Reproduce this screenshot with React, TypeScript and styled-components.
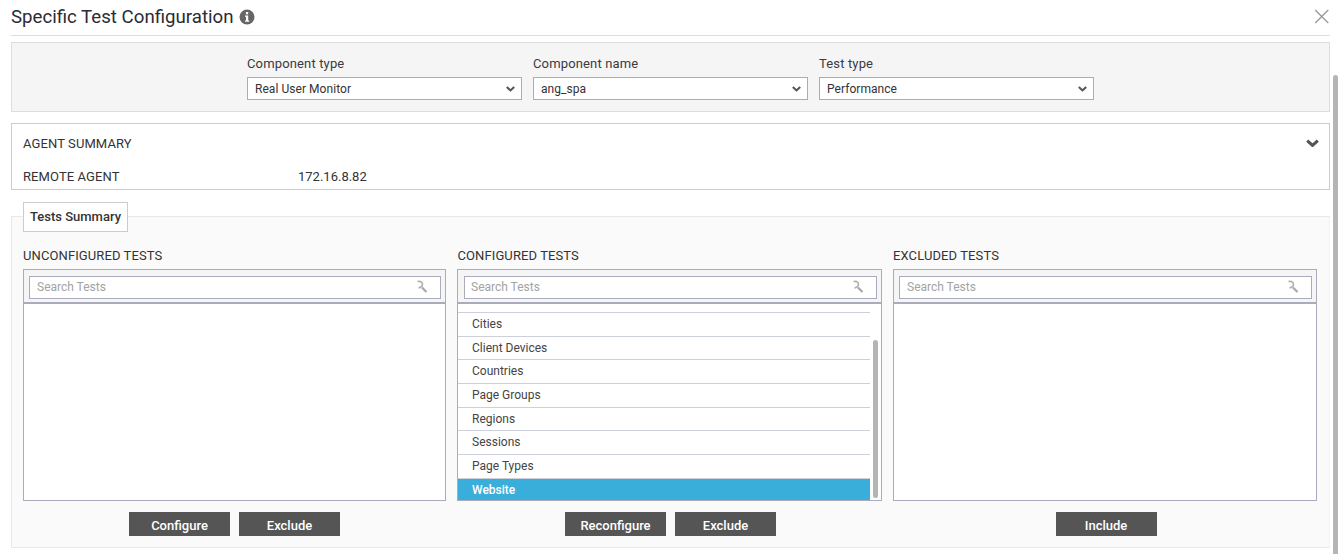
import styled, { createGlobalStyle } from "styled-components";

const GlobalStyle = createGlobalStyle`
    html, body {
        margin: 0;
        height: 100%;
        overflow: hidden;
        background: #fff;
    }
    * {
        box-sizing: border-box;
    }
`;

const Page = styled.div`
    position: relative;
    width: 1338px;
    height: 554px;
    padding: 0 8px 0 11px;
    overflow: hidden;
    font-family: Roboto, "Liberation Sans", sans-serif;
    font-size: 13px;
    color: #333;
`;

const PageScrollThumb = styled.div`
    position: absolute;
    top: 75px;
    right: 0;
    bottom: 0;
    width: 5px;
    border-radius: 3px 3px 0 0;
    background: #b5b5b5;
`;

const Header = styled.div`
    display: flex;
    align-items: center;
    justify-content: space-between;
    height: 36px;
    padding-bottom: 1px;
    border-bottom: 1px solid #ddd;
`;

const TitleRow = styled.div`
    display: flex;
    align-items: center;
    gap: 6px;
`;

const Title = styled.h1`
    margin: 0;
    font-size: 18.67px;
    font-weight: 400;
    line-height: 33px;
    color: #2b2b35;
`;

const CloseButton = styled.button`
    display: flex;
    padding: 0;
    margin: 0 1px 1px 0;
    border: 0;
    background: none;
`;

const FilterPanel = styled.div`
    display: flex;
    justify-content: center;
    gap: 11px;
    height: 70px;
    margin-top: 6px;
    padding: 13px 0 0;
    border: 1px solid #ddd;
    background: #f5f5f5;
`;

const Field = styled.div`
    display: flex;
    flex-direction: column;
    width: 275px;
`;

const FieldLabel = styled.label`
    height: 21px;
    line-height: 16px;
    letter-spacing: 0.15px;
    color: #3a3a42;
`;

const SelectWrap = styled.div`
    position: relative;
    height: 23px;
`;

const Select = styled.select`
    width: 100%;
    height: 100%;
    padding: 0 0 0 7px;
    border: 1px solid #aaacbc;
    border-radius: 0;
    appearance: none;
    background: #fff;
    font: 12px Roboto, "Liberation Sans", sans-serif;
    letter-spacing: 0.05px;
    color: #333;
`;

const SelectChevron = styled.span`
    position: absolute;
    top: 9px;
    right: 7px;
    display: flex;
    pointer-events: none;
`;

const AgentBox = styled.section`
    height: 67px;
    margin-top: 11px;
    padding: 0 10px 0 11px;
    border: 1px solid #ccc;
    background: #fff;
`;

const AgentHeading = styled.div`
    display: flex;
    align-items: center;
    justify-content: space-between;
    height: 38px;
    font-size: 13px;
    letter-spacing: 0.1px;
    color: #333;
`;

const AgentRow = styled.div`
    display: grid;
    grid-template-columns: 275px 1fr;
    margin-top: 7px;
    line-height: 16px;
    font-size: 13px;
`;

const AgentKey = styled.span`
    letter-spacing: 0.1px;
`;

const SummaryPanel = styled.section`
    position: relative;
    height: 332px;
    margin-top: 26px;
    padding: 32px 12px 0 11px;
    border: 1px solid #e8e8e8;
    border-right-color: #f2f2f2;
    background: #fafafa;
`;

const SummaryTab = styled.div`
    position: absolute;
    top: -15px;
    left: 11px;
    height: 30px;
    width: 105px;
    border: 1px solid #ccc;
    background: #fff;
    font-size: 13px;
    font-weight: 500;
    line-height: 27px;
    text-align: center;
    color: #333;
`;

const Columns = styled.div`
    display: grid;
    grid-template-columns: 423px 425px 424px;
    column-gap: 11px;
`;

const Column = styled.div`
    display: flex;
    flex-direction: column;
`;

const ColumnLabel = styled.div<{ $inset?: boolean }>`
    height: 20px;
    padding-left: ${(p) => (p.$inset ? "0.5px" : "0")};
    font-size: 13px;
    letter-spacing: 0.1px;
    line-height: 14px;
    color: #333;
`;

const ListBox = styled.div`
    height: 232px;
    border: 1px solid #aaacbc;
    background: #fff;
`;

const SearchBar = styled.div<{ $inset?: boolean }>`
    position: relative;
    height: 34px;
    padding: 6px 4px 0 ${(p) => (p.$inset ? "6px" : "5px")};
    border-bottom: 2px solid #aaacbc;
    background: #f5f5f5;
`;

const SearchInput = styled.input<{ $inset?: boolean }>`
    display: block;
    width: 100%;
    height: 23px;
    padding: 0 7px 2px ${(p) => (p.$inset ? "6px" : "7px")};
    border: 1px solid #aaacbc;
    background: #fff;
    font: 12px Roboto, "Liberation Sans", sans-serif;

    &::placeholder {
        color: #a3a3a3;
        opacity: 1;
    }
`;

const SearchIcon = styled.svg`
    position: absolute;
    top: 10px;
    right: 17px;
`;

const List = styled.ul`
    position: relative;
    height: 196px;
    margin: 0;
    padding: 8px 0 0;
    overflow: hidden;
    list-style: none;
`;

const ListItem = styled.li<{ $selected?: boolean }>`
    width: 412px;
    height: 23.7px;
    padding-left: 14px;
    border-top: 1px solid #ccd0db;
    line-height: 23.7px;
    font-size: 12px;
    font-weight: ${(p) => (p.$selected ? 500 : 400)};
    background: ${(p) => (p.$selected ? "#3aaedb" : "transparent")};
    color: ${(p) => (p.$selected ? "#fff" : "#444")};
`;

const ListScrollThumb = styled.div`
    position: absolute;
    top: 36px;
    right: 3px;
    bottom: 2px;
    width: 5px;
    border-radius: 3px;
    background: #b5b5b5;
`;

const ButtonRow = styled.div<{ $nudge?: boolean }>`
    display: flex;
    justify-content: center;
    gap: 9px;
    margin-top: 11px;
    padding-left: ${(p) => (p.$nudge ? "2px" : "0")};
`;

const ActionButton = styled.button`
    width: 101px;
    height: 24px;
    padding: 2px 0 0;
    border: 0;
    background: #555;
    font: 500 13px Roboto, "Liberation Sans", sans-serif;
    color: #fff;
`;

function Chevron({ size = 9 }: { size?: number }) {
    return (
        <svg width={size} height={size * 0.64} viewBox="0 0 11 7" fill="none">
            <path d="M1 1.3 5.5 5.4 10 1.3" stroke="#555" strokeWidth="2.6" />
        </svg>
    );
}

function SearchBox({ inset }: { inset?: boolean }) {
    return (
        <SearchBar $inset={inset}>
            <SearchInput $inset={inset} placeholder="Search Tests" />
            <SearchIcon width="12" height="14" viewBox="0 0 12 14" fill="none">
                <path d="M1.5 1.5C5 .8 7 2.5 6.4 5 6 6.8 4.5 7.6 2.5 8" stroke="#b0b0b0" strokeWidth="1.6" />
                <path d="M6 7.5 10.5 12" stroke="#a8a8a8" strokeWidth="2.2" />
            </SearchIcon>
        </SearchBar>
    );
}

const filters = [
    { label: "Component type", value: "Real User Monitor" },
    { label: "Component name", value: "ang_spa" },
    { label: "Test type", value: "Performance" },
];

const configuredTests = [
    "Cities",
    "Client Devices",
    "Countries",
    "Page Groups",
    "Regions",
    "Sessions",
    "Page Types",
    "Website",
];

export default function App() {
    return (
        <Page>
            <GlobalStyle />
            <Header>
                <TitleRow>
                    <Title>Specific Test Configuration</Title>
                    <svg width="16" height="16" viewBox="0 0 16 16">
                        <circle cx="8" cy="8" r="7.5" fill="#666" />
                        <rect x="6.9" y="3" width="2.3" height="2.3" fill="#fff" />
                        <path d="M6 6.6h3.2v5h1v1.2H6v-1.2h1v-3.8H6z" fill="#fff" />
                    </svg>
                </TitleRow>
                <CloseButton aria-label="Close">
                    <svg width="15" height="15" viewBox="0 0 15 15" fill="none">
                        <path d="M1.2 1 14.3 14M14.3 1 1.2 14" stroke="#999" strokeWidth="1.3" />
                    </svg>
                </CloseButton>
            </Header>

            <FilterPanel>
                {filters.map((f) => (
                    <Field key={f.label}>
                        <FieldLabel>{f.label}</FieldLabel>
                        <SelectWrap>
                            <Select defaultValue={f.value}>
                                <option>{f.value}</option>
                            </Select>
                            <SelectChevron>
                                <Chevron />
                            </SelectChevron>
                        </SelectWrap>
                    </Field>
                ))}
            </FilterPanel>

            <AgentBox>
                <AgentHeading>
                    AGENT SUMMARY
                    <Chevron size={13} />
                </AgentHeading>
                <AgentRow>
                    <AgentKey>REMOTE AGENT</AgentKey>
                    <span>172.16.8.82</span>
                </AgentRow>
            </AgentBox>

            <SummaryPanel>
                <SummaryTab>Tests Summary</SummaryTab>
                <Columns>
                    <Column>
                        <ColumnLabel>UNCONFIGURED TESTS</ColumnLabel>
                        <ListBox>
                            <SearchBox />
                        </ListBox>
                        <ButtonRow>
                            <ActionButton>Configure</ActionButton>
                            <ActionButton>Exclude</ActionButton>
                        </ButtonRow>
                    </Column>
                    <Column>
                        <ColumnLabel $inset>CONFIGURED TESTS</ColumnLabel>
                        <ListBox>
                            <SearchBox inset />
                            <List>
                                {configuredTests.map((name) => (
                                    <ListItem key={name} $selected={name === "Website"}>
                                        {name}
                                    </ListItem>
                                ))}
                                <ListScrollThumb />
                            </List>
                        </ListBox>
                        <ButtonRow $nudge>
                            <ActionButton>Reconfigure</ActionButton>
                            <ActionButton>Exclude</ActionButton>
                        </ButtonRow>
                    </Column>
                    <Column>
                        <ColumnLabel>EXCLUDED TESTS</ColumnLabel>
                        <ListBox>
                            <SearchBox />
                        </ListBox>
                        <ButtonRow $nudge>
                            <ActionButton>Include</ActionButton>
                        </ButtonRow>
                    </Column>
                </Columns>
            </SummaryPanel>
            <PageScrollThumb />
        </Page>
    );
}
